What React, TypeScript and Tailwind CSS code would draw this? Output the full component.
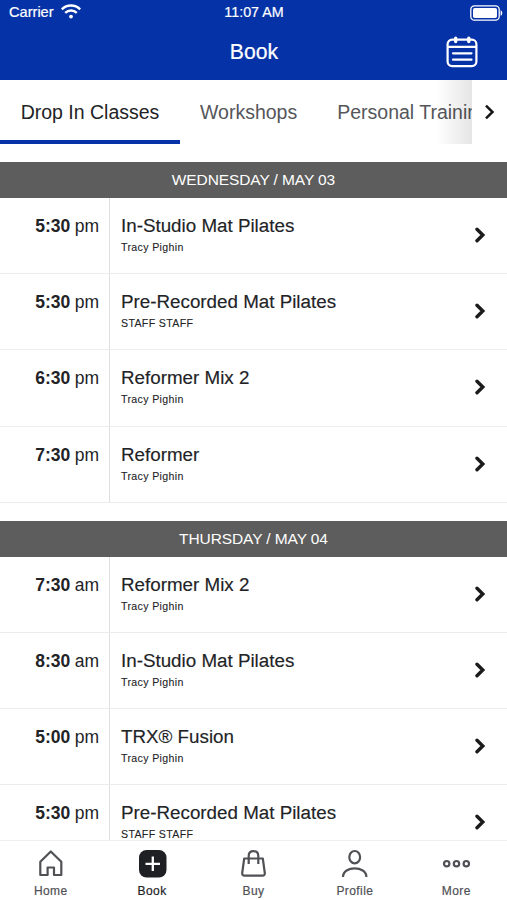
type ClassItem = { time: string; period: string; title: string; staff: string };
type Day = { label: string; classes: ClassItem[] };

const days: Day[] = [
  {
    label: 'WEDNESDAY / MAY 03',
    classes: [
      { time: '5:30', period: 'pm', title: 'In-Studio Mat Pilates', staff: 'Tracy Pighin' },
      { time: '5:30', period: 'pm', title: 'Pre-Recorded Mat Pilates', staff: 'STAFF STAFF' },
      { time: '6:30', period: 'pm', title: 'Reformer Mix 2', staff: 'Tracy Pighin' },
      { time: '7:30', period: 'pm', title: 'Reformer', staff: 'Tracy Pighin' },
    ],
  },
  {
    label: 'THURSDAY / MAY 04',
    classes: [
      { time: '7:30', period: 'am', title: 'Reformer Mix 2', staff: 'Tracy Pighin' },
      { time: '8:30', period: 'am', title: 'In-Studio Mat Pilates', staff: 'Tracy Pighin' },
      { time: '5:00', period: 'pm', title: 'TRX® Fusion', staff: 'Tracy Pighin' },
      { time: '5:30', period: 'pm', title: 'Pre-Recorded Mat Pilates', staff: 'STAFF STAFF' },
    ],
  },
];

function Header() {
  return (
    <header className="h-20 shrink-0 bg-[#0632a8] text-white [-webkit-text-stroke:0.2px_white]">
      <div className="grid h-6 grid-cols-3 items-center text-[14.6px]">
        <div className="flex items-center gap-[7px] pl-[9px]">
          <span className="pt-px">Carrier</span>
          <svg className="h-[15px] w-5" viewBox="0 0 20 15" fill="none" stroke="currentColor" strokeWidth="2.4">
            <path d="M.8 5.3a13.2 13.2 0 0 1 18.4 0M4.2 8.8a8.3 8.3 0 0 1 11.6 0" />
            <circle cx="10" cy="12.6" r="1.9" fill="currentColor" stroke="none" />
          </svg>
        </div>
        <span className="pt-0.5 pl-px text-center text-[14.3px]">11:07 AM</span>
        <svg className="mt-px mr-1 ml-auto h-4 w-[33px]" viewBox="0 0 33 16" fill="none">
          <rect x=".8" y=".8" width="28.4" height="14.4" rx="3.6" stroke="white" strokeWidth="1.3" />
          <rect x="3" y="3" width="24" height="10" rx="1.8" fill="white" />
          <path d="M30.6 5.2c2.2.6 2.2 5 0 5.6Z" fill="white" />
        </svg>
      </div>
      <div className="grid h-14 grid-cols-3 items-center">
        <h1 className="col-start-2 pl-px text-center text-[21.2px]">Book</h1>
        <svg className="mr-[29px] ml-auto h-8 w-8" viewBox="0 0 32 32" fill="none" stroke="white" strokeWidth="2.2" strokeLinecap="round">
          <rect x="1.6" y="3.7" width="28.8" height="26.4" rx="4.5" />
          <path d="M2 10.8h28M7 17.3h18.5M7 23.7h18.5" />
          <path d="M9.7 2.3v3.2M22.8 2.3v3.2" strokeWidth="3.4" />
        </svg>
      </div>
    </header>
  );
}

function Tabs() {
  return (
    <nav className="flex h-16 shrink-0 text-[19.5px] text-[#55565a]">
      <div className="relative flex w-[472px] shrink-0 overflow-hidden whitespace-nowrap">
        <div className="flex w-[180px] shrink-0 items-center justify-center border-b-4 border-[#0632a8] pt-[5px] text-[#222326]">Drop In Classes</div>
        <div className="flex shrink-0 items-center pt-px pl-5">Workshops</div>
        <div className="flex shrink-0 items-center pt-px pl-10">Personal Training</div>
        <div className="absolute inset-y-0 right-0 w-9 bg-linear-to-r from-black/0 to-black/10" />
      </div>
      <div className="flex flex-1 items-center justify-center">
        <svg className="h-4 w-3" viewBox="0 0 12 16" fill="none" stroke="#151515" strokeWidth="2.5">
          <path d="m2 1.7 6.5 6.3L2 14.3" />
        </svg>
      </div>
    </nav>
  );
}

function ClassRow({ item }: { item: ClassItem }) {
  return (
    <div className="flex h-[76.2px] border-b border-[#ececee] text-[#222326]">
      <div className="w-[110px] shrink-0 border-r border-[#dedfe3] pt-4 pr-2.5 text-right text-[17.5px] leading-6 tracking-[-0.08px]">
        <b>{item.time}</b> {item.period}
      </div>
      <div className="flex-1 pt-4 pl-[11px]">
        <div className="text-[18.8px] leading-6 [-webkit-text-stroke:0.15px_#222326]">{item.title}</div>
        <div className="text-[10.6px] leading-[19px] tracking-[0.35px] [-webkit-text-stroke:0.1px_#222326]">{item.staff}</div>
      </div>
      <div className="flex w-10 items-center pb-px pl-[7px]">
        <svg className="h-4 w-3" viewBox="0 0 12 16" fill="none" stroke="#1b1b1d" strokeWidth="3.4" strokeLinecap="round">
          <path d="m3 2.2 5.8 5.8L3 13.8" />
        </svg>
      </div>
    </div>
  );
}

function DaySection({ day }: { day: Day }) {
  return (
    <section className="pt-[18px]">
      <h2 className="flex h-9 items-center justify-center bg-[#5d5d5d] text-[15.5px] tracking-[-0.1px] text-white">{day.label}</h2>
      {day.classes.map((item, i) => (
        <ClassRow key={i} item={item} />
      ))}
    </section>
  );
}

const navItems = [
  {
    label: 'Home',
    icon: <path d="M4.3 12.8 14.8 2.5l10.5 10.3V26H18v-7.5h-6.4V26H4.3Z" />,
  },
  {
    label: 'Book',
    icon: (
      <>
        <rect x="1" y="1" width="27.5" height="27.5" rx="7.5" fill="#1f2023" stroke="none" />
        <path d="M14.8 7.5v14.5M7.5 14.8H22" stroke="white" strokeWidth="2.3" />
      </>
    ),
  },
  {
    label: 'Buy',
    icon: (
      <>
        <path d="M5.2 9.5h18.6l2 14.5q.2 2.7-2.4 2.7H5.6Q3 26.7 3.2 24Z" />
        <path d="M9.7 15V7q0-4.8 4.8-4.8T19.3 7v8" />
      </>
    ),
  },
  {
    label: 'Profile',
    icon: (
      <>
        <ellipse cx="14.7" cy="8.2" rx="5.4" ry="6.2" />
        <path d="M3 28c0-11.5 23.4-11.5 23.4 0" />
      </>
    ),
  },
  {
    label: 'More',
    icon: (
      <>
        <circle cx="4.7" cy="14.7" r="2.7" />
        <circle cx="14.5" cy="14.7" r="2.7" />
        <circle cx="24.3" cy="14.7" r="2.7" />
      </>
    ),
  },
];

function BottomNav() {
  return (
    <nav className="grid h-[60px] shrink-0 grid-cols-5 border-t border-[#eeeeee] bg-white text-[12px] text-[#505155]">
      {navItems.map((item) => (
        <div key={item.label} className={`flex flex-col items-center pt-2 ${item.label === 'Book' ? 'text-[#222326]' : ''}`}>
          <svg className="size-[29px]" viewBox="0 0 29 29" fill="none" stroke="#505155" strokeWidth="2.2" strokeLinejoin="round">
            {item.icon}
          </svg>
          <span className="mt-[5px] leading-4 tracking-[0.4px] [-webkit-text-stroke:0.2px_currentColor]">{item.label}</span>
        </div>
      ))}
    </nav>
  );
}

export default function App() {
  return (
    <div className="flex h-[900px] w-[507px] flex-col overflow-hidden bg-white font-['Liberation_Sans',Arial,sans-serif]">
      <Header />
      <Tabs />
      <main className="min-h-0 flex-1 overflow-hidden">
        {days.map((day) => (
          <DaySection key={day.label} day={day} />
        ))}
      </main>
      <BottomNav />
    </div>
  );
}
